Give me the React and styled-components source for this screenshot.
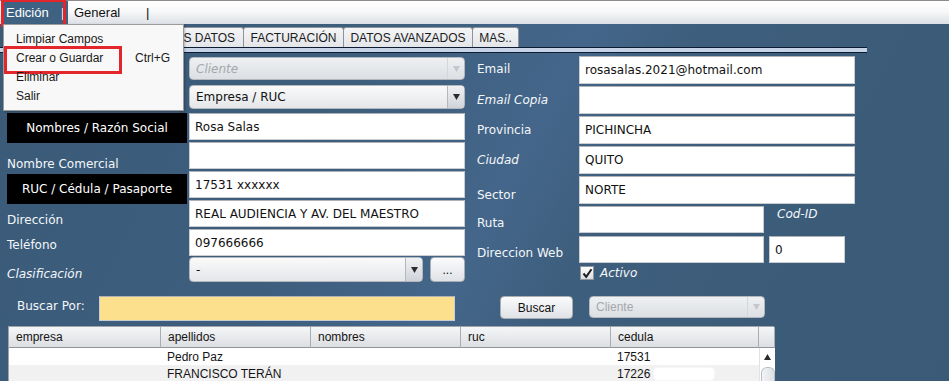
import React from "react";
import styled, { createGlobalStyle, css } from "styled-components";

const comic = `"DejaVu Sans", "Liberation Sans", sans-serif`;
const tahoma = `"Liberation Sans", Arial, sans-serif`;

const Global = createGlobalStyle`
	html, body { margin: 0; padding: 0; }
	body { width: 949px; height: 381px; overflow: hidden; background: #3c5c7a; }
	* { box-sizing: border-box; }
`;

const Page = styled.div`
	position: relative;
	width: 949px;
	height: 381px;
	overflow: hidden;
	display: flex;
	flex-direction: column;
`;

const MenuBar = styled.div`
	height: 24px;
	flex: none;
	display: flex;
	align-items: stretch;
	border-top: 1px solid #8c8c8c;
	background: linear-gradient(#ffffff 0%, #f7f8f9 45%, #dcdfe5 100%);
	font-family: ${tahoma};
	font-size: 13px;
	color: #111;
`;

const Highlight = styled.div`
	margin-left: 3px;
	width: 65px;
	display: flex;
	align-items: center;
	background: #3f6282;
	color: #fff;
`;

const Marked = styled.span`
	position: relative;
	padding-left: 3px;
	width: 58px;
	&::after {
		content: "";
		position: absolute;
		left: -2px;
		top: -6px;
		width: 59px;
		height: 22px;
		border: 3px solid #e3262b;
	}
`;

const Sep = styled.span`
	margin-left: ${(p) => p.$ml || 0}px;
`;

const BarItem = styled.span`
	display: flex;
	align-items: center;
	margin-left: ${(p) => p.$ml || 0}px;
	width: ${(p) => p.$w}px;
`;

const DropMenu = styled.div`
	position: absolute;
	left: 3px;
	top: 24px;
	width: 181px;
	height: 87px;
	padding: 4px 0;
	background: #f8f8f8;
	border: 1px solid #9a9a9a;
	box-shadow: 1px 1px 2px rgba(0, 0, 0, 0.25);
	font-family: ${tahoma};
	font-size: 12px;
	color: #1a1a1a;
	z-index: 5;
`;

const DropItem = styled.div`
	position: relative;
	height: 19px;
	display: flex;
	align-items: center;
	padding-left: 12px;
	${(p) =>
		p.$marked &&
		css`
			&::after {
				content: "";
				position: absolute;
				left: 0;
				top: -2px;
				width: 112px;
				height: 22px;
				border: 3px solid #e3262b;
			}
		`}
`;

const DropLabel = styled.span`
	width: 119px;
`;

const Main = styled.div`
	flex: 1;
	display: flex;
	flex-direction: column;
	background: linear-gradient(
		118deg,
		#3a5a78 0%,
		#3d5e7d 35%,
		#44668a 52%,
		#3d5e7c 62%,
		#3a5a77 100%
	);
`;

const TabStrip = styled.div`
	margin-top: 3px;
	height: 20px;
	display: flex;
	padding-left: 8px;
`;

const Tab = styled.div`
	width: ${(p) => p.$w}px;
	height: 20px;
	display: flex;
	align-items: center;
	justify-content: ${(p) => (p.$end ? "flex-end" : "center")};
	padding-right: ${(p) => (p.$end ? 8 : 0)}px;
	background: linear-gradient(#f4f5f7, #e3e5e9);
	border: 1px solid #8d9399;
	border-bottom: none;
	border-radius: 3px 3px 0 0;
	margin-right: -1px;
	font-family: ${tahoma};
	font-size: 12px;
	color: #1b1b1b;
	white-space: nowrap;
`;

const TabRule = styled.div`
	width: 867px;
	height: 6px;
	border-top: 1px solid #0d1c33;
	border-bottom: 1px solid #0d1c33;
	background: #c6d3e6;
`;

const FormArea = styled.div`
	margin-top: 3px;
	height: 227px;
	display: flex;
	align-items: flex-start;
`;

const LeftCol = styled.div`
	margin-left: 7px;
	padding-top: 1px;
	width: 458px;
	display: flex;
	flex-direction: column;
`;

const RightCol = styled.div`
	margin-left: 12px;
	width: 380px;
	display: flex;
	flex-direction: column;
`;

const Row = styled.div`
	height: ${(p) => p.$h}px;
	margin-bottom: ${(p) => p.$mb || 0}px;
	display: flex;
	align-items: flex-start;
	flex: none;
`;

const Label = styled.div`
	width: ${(p) => p.$w || 182}px;
	flex: none;
	padding-top: ${(p) => p.$top || 0}px;
	font-family: ${comic};
	font-size: 12px;
	line-height: 14px;
	color: #f4f7fa;
	font-style: ${(p) => (p.$italic ? "oblique 6deg" : "normal")};
	white-space: nowrap;
`;

const BlackLabel = styled.div`
	width: 180px;
	height: 30px;
	margin-right: 2px;
	margin-top: ${(p) => p.$top || 0}px;
	flex: none;
	background: #000;
	color: #fff;
	display: flex;
	align-items: center;
	justify-content: center;
	font-family: ${comic};
	font-size: 12px;
`;

const Input = styled.div`
	width: ${(p) => p.$w || 276}px;
	height: ${(p) => p.$h || 27}px;
	margin-left: ${(p) => p.$ml || 0}px;
	flex: none;
	background: ${(p) => p.$bg || "#fff"};
	border: 1px solid #c9ccd0;
	border-top-color: #aeb2b7;
	display: flex;
	align-items: center;
	padding-left: 5px;
	font-family: ${comic};
	font-size: 12px;
	color: #111;
	white-space: nowrap;
	overflow: hidden;
`;

const Combo = styled.div`
	width: ${(p) => p.$w || 276}px;
	height: ${(p) => p.$h}px;
	margin-left: ${(p) => p.$ml || 0}px;
	flex: none;
	display: flex;
	align-items: stretch;
	border: 1px solid #b4b8bd;
	border-radius: 4px;
	background: ${(p) =>
		p.$disabled
			? "linear-gradient(#eef0f2, #dcdfe3)"
			: "linear-gradient(#fafafa, #e4e6e9)"};
	font-family: ${(p) => (p.$plain ? tahoma : comic)};
	font-size: 12px;
	color: ${(p) => (p.$disabled ? "#a4a8ad" : "#111")};
	font-style: ${(p) => (p.$italic ? "oblique 6deg" : "normal")};
	overflow: hidden;
`;

const ComboText = styled.span`
	flex: 1;
	display: flex;
	align-items: center;
	padding-left: 6px;
`;

const ComboArrow = styled.span`
	width: 17px;
	display: flex;
	align-items: center;
	justify-content: center;
	border-left: 1px solid ${(p) => (p.$disabled ? "#d3d6da" : "#b4b8bd")};
	background: ${(p) =>
		p.$disabled ? "transparent" : "linear-gradient(#f0f1f3, #cfd3d8)"};
`;

const SmallButton = styled.div`
	width: ${(p) => p.$w}px;
	height: ${(p) => p.$h}px;
	margin-left: ${(p) => p.$ml || 0}px;
	flex: none;
	display: flex;
	align-items: center;
	justify-content: center;
	border: 1px solid #a9aeb4;
	border-radius: 4px;
	background: linear-gradient(#fbfbfc, #dfe2e6);
	font-family: ${tahoma};
	font-size: 12px;
	color: #111;
`;

const CodLabel = styled.div`
	margin-left: 13px;
	padding-top: 1px;
	font-family: ${comic};
	font-size: 12px;
	line-height: 14px;
	font-style: oblique 6deg;
	color: #f4f7fa;
`;

const CheckRow = styled.div`
	margin-left: 103px;
	margin-top: -1px;
	height: 16px;
	display: flex;
	align-items: center;
	gap: 6px;
	font-family: ${comic};
	font-size: 12px;
	font-style: oblique 6deg;
	color: #f4f7fa;
`;

const CheckBox = styled.span`
	width: 14px;
	height: 14px;
	border: 1px solid #8e959c;
	background: linear-gradient(#ffffff, #d9dde2);
	display: flex;
	align-items: center;
	justify-content: center;
`;

const SearchRow = styled.div`
	margin-top: 13px;
	height: 25px;
	display: flex;
	align-items: flex-start;
	padding-left: 17px;
`;

const Table = styled.div`
	margin-top: 5px;
	margin-left: 8px;
	width: 766px;
	display: grid;
	grid-template-columns: 152px 150px 150px 150px 148px 16px;
	background: #fff;
	border: 1px solid #9ea4aa;
	border-bottom: none;
	font-family: ${tahoma};
	font-size: 12px;
	color: #141414;
`;

const HeadCell = styled.div`
	height: 21px;
	display: flex;
	align-items: center;
	padding-left: 7px;
	background: linear-gradient(#f5f6f7, #dcdee2);
	border-right: 1px solid #a9aeb4;
	border-bottom: 1px solid #8f959b;
	&:last-child {
		border-right: none;
	}
`;

const Cell = styled.div`
	height: 17px;
	display: flex;
	align-items: center;
	padding-left: 6px;
	background: ${(p) => (p.$alt ? "#f1f1f2" : "#fff")};
	white-space: nowrap;
`;

const Redact = styled.span`
	display: inline-block;
	width: 60px;
	height: 12px;
	margin-left: 4px;
	border-radius: 4px;
	background: #fff;
	box-shadow: 0 0 3px #fff;
`;

const ScrollCell = styled.div`
	height: 17px;
	display: flex;
	align-items: center;
	justify-content: center;
	background: #fff;
	border-left: 1px solid #e0e2e5;
`;

const Thumb = styled.div`
	margin-top: 2px;
	width: 14px;
	height: 15px;
	align-self: flex-start;
	border: 1px solid #b9bec4;
	border-bottom: none;
	border-radius: 6px 6px 0 0;
	background: linear-gradient(90deg, #f3f4f6, #dcdfe3);
`;

function Arrow({ color = "#2b2b2b", up }) {
	return (
		<svg width="7" height="6" viewBox="0 0 7 6">
			<path d={up ? "M0 6 L3.5 0 L7 6 Z" : "M0 0 L7 0 L3.5 6 Z"} fill={color} />
		</svg>
	);
}

function ComboBox({ value, w, h, ml, disabled, italic, plain }) {
	return (
		<Combo $w={w} $h={h} $ml={ml} $disabled={disabled} $italic={italic} $plain={plain}>
			<ComboText>{value}</ComboText>
			<ComboArrow $disabled={disabled}>
				<Arrow color={disabled ? "#c4c8cd" : "#2b2b2b"} />
			</ComboArrow>
		</Combo>
	);
}

const rightRows = [
	{ label: "Email", value: "rosasalas.2021@hotmail.com", top: 6 },
	{ label: "Email Copia", value: "", top: 7, italic: true },
	{ label: "Provincia", value: "PICHINCHA", top: 7 },
	{ label: "Ciudad", value: "QUITO", top: 7, italic: true },
	{ label: "Sector", value: "NORTE", top: 12 },
];

const columns = ["empresa", "apellidos", "nombres", "ruc", "cedula"];
const rows = [
	["", "Pedro Paz", "", "", "17531"],
	["", "FRANCISCO TERÁN", "", "", "17226"],
];

export default function App() {
	return (
		<Page>
			<Global />
			<MenuBar>
				<Highlight>
					<Marked>Edición</Marked>
					<Sep>|</Sep>
				</Highlight>
				<BarItem $ml={6} $w={72}>General</BarItem>
				<Sep as={BarItem}>|</Sep>
			</MenuBar>

			<DropMenu>
				<DropItem>
					<DropLabel>Limpiar Campos</DropLabel>
				</DropItem>
				<DropItem $marked>
					<DropLabel>Crear o Guardar</DropLabel>
					<span>Ctrl+G</span>
				</DropItem>
				<DropItem>
					<DropLabel>Eliminar</DropLabel>
				</DropItem>
				<DropItem>
					<DropLabel>Salir</DropLabel>
				</DropItem>
			</DropMenu>

			<Main>
				<TabStrip>
					<Tab $w={236} $end>
						OTROS DATOS
					</Tab>
					<Tab $w={101}>FACTURACIÓN</Tab>
					<Tab $w={130}>DATOS AVANZADOS</Tab>
					<Tab $w={47}>MAS..</Tab>
				</TabStrip>
				<TabRule />

				<FormArea>
					<LeftCol>
						<Row $h={23} $mb={5}>
							<ComboBox value="Cliente" w={276} h={23} ml={182} disabled italic />
						</Row>
						<Row $h={24} $mb={4}>
							<ComboBox value="Empresa / RUC" w={276} h={24} ml={182} />
						</Row>
						<Row $h={29}>
							<BlackLabel>Nombres / Razón Social</BlackLabel>
							<Input>Rosa Salas</Input>
						</Row>
						<Row $h={29}>
							<Label $top={15}>Nombre Comercial</Label>
							<Input />
						</Row>
						<Row $h={29}>
							<BlackLabel $top={3}>RUC / Cédula / Pasaporte</BlackLabel>
							<Input>17531 xxxxxx</Input>
						</Row>
						<Row $h={29}>
							<Label $top={13}>Dirección</Label>
							<Input>REAL AUDIENCIA Y AV. DEL MAESTRO</Input>
						</Row>
						<Row $h={28}>
							<Label $top={9}>Teléfono</Label>
							<Input>097666666</Input>
						</Row>
						<Row $h={25}>
							<Label $top={10} $italic>
								Clasificación
							</Label>
							<ComboBox value="-" w={234} h={25} />
							<SmallButton $w={35} $h={25} $ml={7}>
								...
							</SmallButton>
						</Row>
					</LeftCol>

					<RightCol>
						{rightRows.map((r) => (
							<Row $h={30} key={r.label}>
								<Label $w={102} $top={r.top} $italic={r.italic}>
									{r.label}
								</Label>
								<Input $h={28}>{r.value}</Input>
							</Row>
						))}
						<Row $h={30}>
							<Label $w={102} $top={10}>
								Ruta
							</Label>
							<Input $w={185} />
							<CodLabel>Cod-ID</CodLabel>
						</Row>
						<Row $h={30}>
							<Label $w={102} $top={10}>
								Direccion Web
							</Label>
							<Input $w={185} />
							<Input $w={76} $ml={5}>
								0
							</Input>
						</Row>
						<CheckRow>
							<CheckBox>
								<svg width="11" height="11" viewBox="0 0 11 11">
									<path
										d="M1.5 5.5 L4.2 8.8 L9.5 1.2"
										fill="none"
										stroke="#1d1d1d"
										strokeWidth="2"
									/>
								</svg>
							</CheckBox>
							Activo
						</CheckRow>
					</RightCol>
				</FormArea>

				<SearchRow>
					<Label $w={82} $top={3}>
						Buscar Por:
					</Label>
					<Input $w={356} $h={25} $bg="#fde08d" />
					<SmallButton $w={73} $h={23} $ml={45}>
						Buscar
					</SmallButton>
					<ComboBox value="Cliente" w={176} h={22} ml={16} disabled plain />
				</SearchRow>

				<Table>
					{columns.map((c) => (
						<HeadCell key={c}>{c}</HeadCell>
					))}
					<HeadCell />
					{rows.map((r, i) => (
						<React.Fragment key={i}>
							{r.map((v, j) => (
								<Cell key={j} $alt={i % 2 === 1}>
									{v}
									{i === 1 && j === 4 && <Redact />}
								</Cell>
							))}
							<ScrollCell>{i === 0 ? <Arrow up /> : <Thumb />}</ScrollCell>
						</React.Fragment>
					))}
				</Table>
			</Main>
		</Page>
	);
}
